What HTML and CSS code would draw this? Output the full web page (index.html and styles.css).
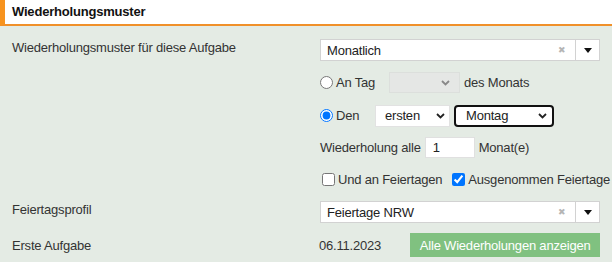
FILE: index.html
```html
<!DOCTYPE html>
<html lang="de">
  <head>
    <meta charset="UTF-8" />
    <title>Wiederholungsmuster</title>
    <link rel="stylesheet" href="styles.css">
  </head>
  <body>
    <div class="panel">
      <div class="panel-head">
        <h2>Wiederholungsmuster</h2>
      </div>

      <div class="panel-body">
        <div class="row">
          <div class="label">Wiederholungsmuster für diese Aufgabe</div>
          <div class="field">
            <div class="combo">
              <span class="combo-text">Monatlich</span>
              <span class="combo-clear">&#x2716;</span>
              <span class="combo-arrow">
                <svg width="8" height="5" viewBox="0 0 8 5"><polygon points="0,0 8,0 4,5" fill="#111" /></svg>
              </span>
            </div>

            <div class="line line-tag">
              <input type="radio" id="r-tag" name="mode" />
              <label for="r-tag" class="opt-label opt-tag">An Tag</label>
              <span class="sel sel-day disabled">
                <select disabled><option></option></select>
                <svg class="chev" width="9" height="6" viewBox="0 0 9 6"><polyline points="1,1 4.5,4.5 8,1" fill="none" stroke="#888" stroke-width="1.8" /></svg>
              </span>
              <span class="after">des Monats</span>
            </div>

            <div class="line line-den">
              <input type="radio" id="r-den" name="mode" checked />
              <label for="r-den" class="opt-label opt-den">Den</label>
              <span class="sel sel-nth">
                <select><option>ersten</option></select>
                <svg class="chev" width="9" height="6" viewBox="0 0 9 6"><polyline points="1,1 4.5,4.5 8,1" fill="none" stroke="#222" stroke-width="1.8" /></svg>
              </span>
              <span class="sel sel-weekday focused">
                <select><option>Montag</option></select>
                <svg class="chev" width="9" height="6" viewBox="0 0 9 6"><polyline points="1,1 4.5,4.5 8,1" fill="none" stroke="#222" stroke-width="1.8" /></svg>
              </span>
            </div>

            <div class="line line-every">
              <span>Wiederholung alle</span>
              <input type="text" class="num" value="1" />
              <span class="after">Monat(e)</span>
            </div>

            <div class="line line-checks">
              <input type="checkbox" id="c-hol" />
              <label for="c-hol" class="opt-label">Und an Feiertagen</label>
              <input type="checkbox" id="c-ex" class="second" checked />
              <label for="c-ex" class="opt-label">Ausgenommen Feiertage</label>
            </div>
          </div>
        </div>

        <div class="row row-profile">
          <div class="label">Feiertagsprofil</div>
          <div class="field">
            <div class="combo">
              <span class="combo-text">Feiertage NRW</span>
              <span class="combo-clear">&#x2716;</span>
              <span class="combo-arrow">
                <svg width="8" height="5" viewBox="0 0 8 5"><polygon points="0,0 8,0 4,5" fill="#111" /></svg>
              </span>
            </div>
          </div>
        </div>

        <div class="row row-first">
          <div class="label">Erste Aufgabe</div>
          <div class="field field-first">
            <span class="date">06.11.2023</span>
            <button type="button" class="btn-green">Alle Wiederholungen anzeigen</button>
          </div>
        </div>
      </div>
    </div>
  </body>
</html>
```

FILE: styles.css
```css
body {
  margin: 0;
  font-family: "Liberation Sans", Arial, sans-serif;
  font-size: 13px;
  letter-spacing: -0.2px;
  color: #333;
  background-color: #e4ebe4;
  overflow: hidden;
}

.panel-head {
  background-color: #fff;
  border-left: 5px solid #f7931e;
  border-bottom: 2px solid #f0902a;
  height: 24px;
  padding-left: 7px;
}

.panel-head h2 {
  margin: 0;
  font-size: 13px;
  line-height: 24px;
  font-weight: bold;
  color: #111;
}

.panel-body {
  padding: 13px 0 0 12px;
}

.row {
  display: flex;
}

.label {
  width: 308px;
  line-height: 15px;
  padding-top: 1px;
}

.field {
  width: 280px;
}

/* select2 style combo */
.combo {
  display: flex;
  align-items: center;
  height: 22px;
  box-sizing: border-box;
  background-color: #fff;
  border: 1px solid #d2d2d2;
  color: #222;
}

.combo-text {
  flex: 1;
  padding-left: 6px;
}

.combo-clear {
  color: #b5b5b5;
  font-size: 9px;
  width: 14px;
  margin-right: 6px;
  text-align: center;
}

.combo-arrow {
  width: 23px;
  height: 20px;
  border-left: 1px solid #d2d2d2;
  display: flex;
  align-items: center;
  justify-content: center;
}

.line {
  display: flex;
  align-items: center;
  white-space: nowrap;
}

.line input[type="radio"],
.line input[type="checkbox"] {
  width: 13px;
  height: 13px;
  margin: 0 3px 0 0;
}

.line-tag {
  margin-top: 11px;
  height: 21px;
}

.opt-tag {
  width: 53px;
}

.line-den {
  margin-top: 11px;
  height: 23px;
}

.opt-den {
  width: 39px;
}

.sel {
  position: relative;
  display: inline-block;
  box-sizing: border-box;
}

.sel select {
  appearance: none;
  -webkit-appearance: none;
  width: 100%;
  height: 100%;
  border: 1px solid #e2e2e2;
  background-color: #fff;
  font-family: inherit;
  font-size: 13px;
  letter-spacing: -0.2px;
  color: #222;
  padding: 0 0 0 9px;
  outline: none;
}

.sel .chev {
  position: absolute;
  top: 50%;
  margin-top: -3px;
  pointer-events: none;
}

.sel-day {
  width: 71px;
  height: 21px;
}

.sel-day select {
  background-color: #e6e6e6;
  border-color: #dadada;
}

.sel-day .chev {
  right: 10px;
}

.sel-nth {
  width: 75px;
  height: 22px;
}

.sel-nth .chev {
  right: 5px;
}

.sel-weekday {
  width: 100px;
  height: 22px;
  margin-left: 4px;
}

.sel-weekday select {
  border: 2px solid #111;
  border-radius: 4px;
  padding-left: 10px;
}

.sel-weekday .chev {
  right: 7px;
}

.after {
  margin-left: 4px;
}

.line-every {
  margin-top: 10px;
  height: 21px;
}

.num {
  width: 50px;
  height: 21px;
  box-sizing: border-box;
  margin-left: 4px;
  border: 1px solid #e0e0e0;
  padding: 0 0 0 7px;
  font-family: inherit;
  font-size: 13px;
  color: #222;
  outline: none;
}

.line-checks {
  margin-top: 13px;
  height: 17px;
}

.line-checks input[type="checkbox"] {
  margin-left: 2px;
}

.line-checks input.second {
  margin-left: 10px;
}

.row-profile {
  margin-top: 13px;
}

.row-first {
  margin-top: 10px;
  align-items: center;
}

.row-first .label {
  padding-top: 0;
}

.field-first {
  display: flex;
  align-items: center;
}

.date {
  width: 92px;
  margin-left: -1px;
}

.btn-green {
  width: 191px;
  height: 24px;
  padding: 0;
  border: none;
  background-color: #80c180;
  color: #fff;
  font-family: inherit;
  font-size: 13px;
  letter-spacing: -0.2px;
  cursor: pointer;
}
```
